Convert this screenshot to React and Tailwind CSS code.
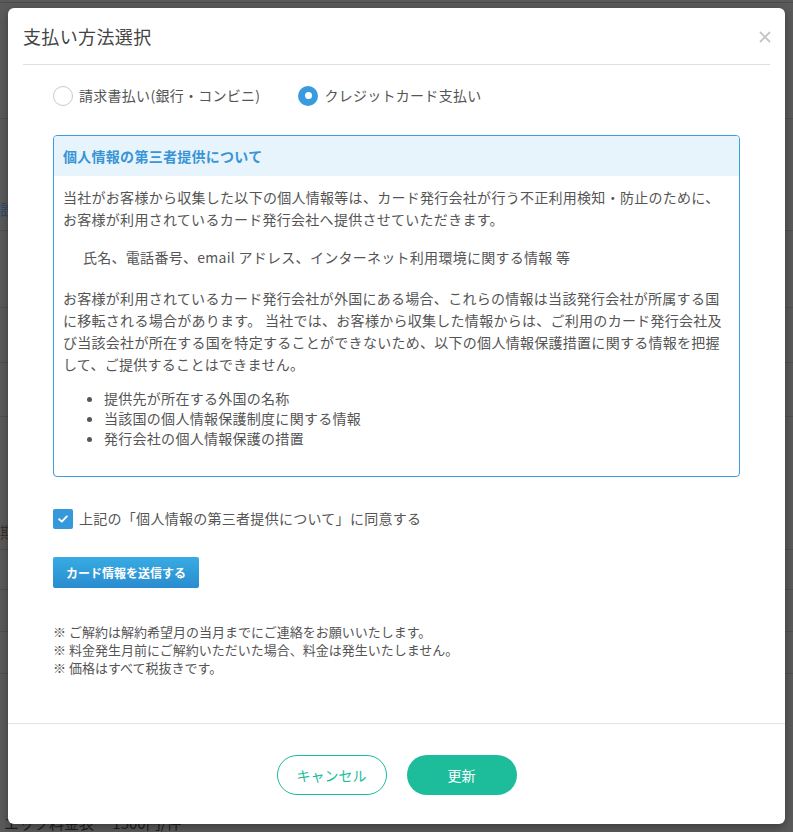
import React from "react";

const font = { fontFamily: '"Noto Sans CJK JP", "Noto Sans", sans-serif' };

function Radio({ checked, label }) {
  return (
    <label className="flex items-center gap-[6px]">
      {checked ? (
        <span className="flex h-[20px] w-[20px] items-center justify-center rounded-full bg-[#3a9ae0]">
          <span className="h-[7px] w-[7px] rounded-full bg-white" />
        </span>
      ) : (
        <span className="h-[20px] w-[20px] rounded-full border border-[#c9c9c9] bg-white" />
      )}
      <span className="text-[14px] tracking-[0.02em] text-[#555]">{label}</span>
    </label>
  );
}

export default function App() {
  return (
    <div className="relative h-[832px] w-[793px] overflow-hidden bg-[#5a5a5a]" style={font}>
      {/* underlying dimmed page */}
      <div className="flex h-full flex-col">
        <div className="h-[3px] border-b border-[#4b4b4b]" />
        <div className="h-[117px] border-b border-[#4f4f4f]" />
        <div className="flex h-[112px] flex-col justify-end border-b border-[#4f4f4f] pb-[12px]">
          <span className="text-[15px] leading-[18px] text-[#2a4a6e]">設置</span>
        </div>
        <div className="h-[77px] border-b border-[#4f4f4f]" />
        <div className="h-[56px] border-b border-[#4f4f4f]" />
        <div className="h-[54px] border-b border-[#4f4f4f]" />
        <div className="flex h-[133px] flex-col justify-end border-b border-[#4f4f4f] pb-[8px]">
          <span className="text-[15px] leading-[18px] text-[#3a3028]">期間</span>
        </div>
        <div className="h-[41px] border-b border-[#4f4f4f]" />
        <div className="h-[42px] border-b border-[#4f4f4f]" />
        <div className="h-[42px] border-b border-[#4f4f4f]" />
        <div className="mt-[140px] pl-[4px] text-[15px] leading-[18px] text-[#1e1e1e]">
          エック料金表　 1500円/件
        </div>
      </div>

      {/* modal */}
      <div className="absolute left-[8px] top-[8px] w-[777px] rounded-[6px] bg-white shadow-[0_3px_9px_rgba(0,0,0,0.35)]">
        <div className="mx-[15px] flex h-[57px] items-center justify-between border-b border-[#e0e0e0]">
          <h2 className="text-[18px] tracking-[0.02em] text-[#444]">支払い方法選択</h2>
          <svg width="12" height="12" viewBox="0 0 12 12" className="mr-[-1px] mt-[2px]">
            <path d="M1 1 L11 11 M11 1 L1 11" stroke="#c4c4c4" strokeWidth="1.8" />
          </svg>
        </div>

        <div className="px-[45px]">
          <div className="mt-[20px] flex items-center gap-[38px]">
            <Radio label="請求書払い(銀行・コンビニ)" />
            <Radio checked label="クレジットカード支払い" />
          </div>

          <div className="mt-[29px] overflow-hidden rounded-[4px] border border-[#3d9be0]">
            <div className="flex h-[40px] items-center bg-[#e8f4fc] px-[9px]">
              <h3 className="text-[14px] font-bold tracking-[0.02em] text-[#3a95d6]">
                個人情報の第三者提供について
              </h3>
            </div>
            <div className="px-[9px] pb-[28px] pt-[10px] text-[14px] leading-[22px] tracking-[0.02em] text-[#555]">
              <p>
                当社がお客様から収集した以下の個人情報等は、カード発行会社が行う不正利用検知・防止のために、お客様が利用されているカード発行会社へ提供させていただきます。
              </p>
              <p className="mt-[16px] pl-[20px]">
                氏名、電話番号、email アドレス、インターネット利用環境に関する情報 等
              </p>
              <p className="mt-[19px]">
                お客様が利用されているカード発行会社が外国にある場合、これらの情報は当該発行会社が所属する国に移転される場合があります。 当社では、お客様から収集した情報からは、ご利用のカード発行会社及び当該会社が所在する国を特定することができないため、以下の個人情報保護措置に関する情報を把握して、ご提供することはできません。
              </p>
              <ul className="mt-[13px] list-disc pl-[41px] leading-[20px] marker:text-[#555]">
                <li>提供先が所在する外国の名称</li>
                <li>当該国の個人情報保護制度に関する情報</li>
                <li>発行会社の個人情報保護の措置</li>
              </ul>
            </div>
          </div>

          <label className="mt-[31px] flex items-center gap-[6px]">
            <span className="flex h-[20px] w-[20px] items-center justify-center rounded-[2px] bg-[#3498db]">
              <svg width="10" height="8" viewBox="0 0 10 8">
                <path d="M1.2 4.2 L3.8 6.6 L8.8 1.4" stroke="white" strokeWidth="1.9" fill="none" strokeLinecap="round" strokeLinejoin="round" />
              </svg>
            </span>
            <span className="text-[14px] tracking-[0.02em] text-[#555]">
              上記の「個人情報の第三者提供について」に同意する
            </span>
          </label>

          <button className="mt-[28px] flex h-[31px] w-[146px] items-center justify-center rounded-[2px] bg-gradient-to-b from-[#38abe3] to-[#2a8ccf] text-[12px] font-bold text-white">
            カード情報を送信する
          </button>

          <div className="mt-[35px] text-[13px] leading-[18px] text-[#555]">
            <p>※ ご解約は解約希望月の当月までにご連絡をお願いいたします。</p>
            <p>※ 料金発生月前にご解約いただいた場合、料金は発生いたしません。</p>
            <p>※ 価格はすべて税抜きです。</p>
          </div>
        </div>

        <div className="mt-[46px] flex justify-center gap-[20px] border-t border-[#e3e3e3] pb-[29px] pt-[31px]">
          <button className="h-[40px] w-[110px] rounded-full border border-[#1abc9c] bg-white text-[14px] text-[#1abc9c]">
            キャンセル
          </button>
          <button className="h-[40px] w-[110px] rounded-full bg-[#1dbd9c] text-[14px] text-white">
            更新
          </button>
        </div>
      </div>
    </div>
  );
}
